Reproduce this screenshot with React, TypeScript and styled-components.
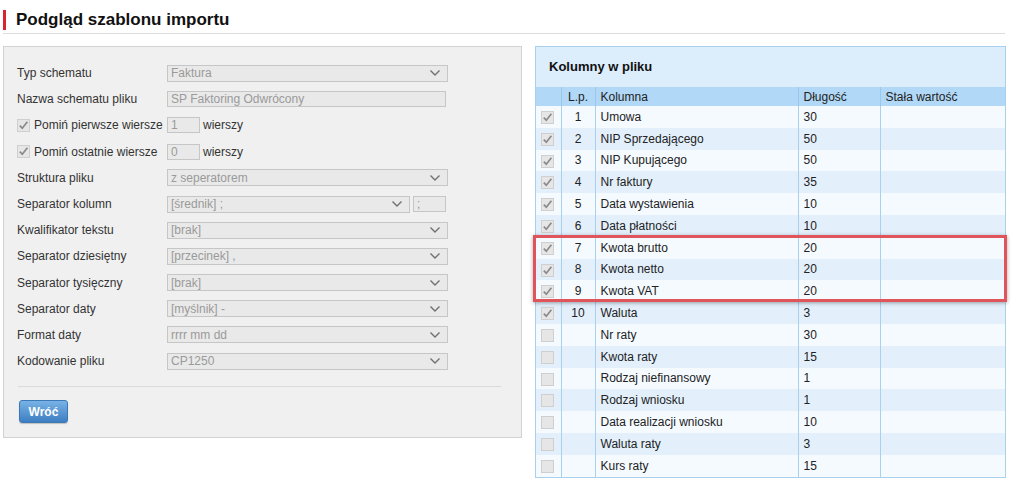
import styled, { createGlobalStyle } from "styled-components";

const GlobalStyle = createGlobalStyle`
    body {
        margin: 0;
        background: #ffffff;
        font-family: "Liberation Sans", Arial, sans-serif;
        font-size: 12px;
        color: #222;
    }
`;

const settings: { label: string; value: string; kind: "select" | "input" }[] = [
    { label: "Typ schematu", value: "Faktura", kind: "select" },
    { label: "Nazwa schematu pliku", value: "SP Faktoring Odwrócony", kind: "input" },
];

const lowerSettings: { label: string; value: string }[] = [
    { label: "Kwalifikator tekstu", value: "[brak]" },
    { label: "Separator dziesiętny", value: "[przecinek] ," },
    { label: "Separator tysięczny", value: "[brak]" },
    { label: "Separator daty", value: "[myślnik] -" },
    { label: "Format daty", value: "rrrr mm dd" },
    { label: "Kodowanie pliku", value: "CP1250" },
];

const columns: { lp?: number; name: string; len: number }[] = [
    { lp: 1, name: "Umowa", len: 30 },
    { lp: 2, name: "NIP Sprzedającego", len: 50 },
    { lp: 3, name: "NIP Kupującego", len: 50 },
    { lp: 4, name: "Nr faktury", len: 35 },
    { lp: 5, name: "Data wystawienia", len: 10 },
    { lp: 6, name: "Data płatności", len: 10 },
    { lp: 7, name: "Kwota brutto", len: 20 },
    { lp: 8, name: "Kwota netto", len: 20 },
    { lp: 9, name: "Kwota VAT", len: 20 },
    { lp: 10, name: "Waluta", len: 3 },
    { name: "Nr raty", len: 30 },
    { name: "Kwota raty", len: 15 },
    { name: "Rodzaj niefinansowy", len: 1 },
    { name: "Rodzaj wniosku", len: 1 },
    { name: "Data realizacji wniosku", len: 10 },
    { name: "Waluta raty", len: 3 },
    { name: "Kurs raty", len: 15 },
];

const Chevron = () => (
    <svg width="12" height="8" viewBox="0 0 12 8">
        <path d="M1.5 1.5 L6 6 L10.5 1.5" fill="none" stroke="#707070" strokeWidth="1.4" />
    </svg>
);

const Tick = ({ on }: { on: boolean }) => (
    <CheckBox>
        {on && (
            <svg width="11" height="11" viewBox="0 0 11 11">
                <path d="M1.8 5.6 L4.3 8.3 L9.4 1.8" fill="none" stroke="#8a8a8a" strokeWidth="1.7" />
            </svg>
        )}
    </CheckBox>
);

export default function App() {
    return (
        <>
            <GlobalStyle />
            <Page>
                <TitleBar>
                    <Title>Podgląd szablonu importu</Title>
                </TitleBar>
                <Content>
                    <FormPanel>
                        {settings.map((s) => (
                            <FormRow key={s.label}>
                                <Label>{s.label}</Label>
                                {s.kind === "select" ? (
                                    <Select width={281}>
                                        <span>{s.value}</span>
                                        <Chevron />
                                    </Select>
                                ) : (
                                    <TextInput width={279}>{s.value}</TextInput>
                                )}
                            </FormRow>
                        ))}
                        <FormRow>
                            <CheckLabel>
                                <Tick on />
                                Pomiń pierwsze wiersze
                            </CheckLabel>
                            <TextInput width={33}>1</TextInput>
                            <Unit>wierszy</Unit>
                        </FormRow>
                        <FormRow>
                            <CheckLabel>
                                <Tick on />
                                Pomiń ostatnie wiersze
                            </CheckLabel>
                            <TextInput width={33}>0</TextInput>
                            <Unit>wierszy</Unit>
                        </FormRow>
                        <FormRow>
                            <Label>Struktura pliku</Label>
                            <Select width={281}>
                                <span>z seperatorem</span>
                                <Chevron />
                            </Select>
                        </FormRow>
                        <FormRow>
                            <Label>Separator kolumn</Label>
                            <Select width={243}>
                                <span>[średnik] ;</span>
                                <Chevron />
                            </Select>
                            <TextInput width={33} style={{ marginLeft: 3 }}>
                                ;
                            </TextInput>
                        </FormRow>
                        {lowerSettings.map((s) => (
                            <FormRow key={s.label}>
                                <Label>{s.label}</Label>
                                <Select width={281}>
                                    <span>{s.value}</span>
                                    <Chevron />
                                </Select>
                            </FormRow>
                        ))}
                        <Divider />
                        <BackButton>Wróć</BackButton>
                    </FormPanel>

                    <ColumnsPanel>
                        <PanelHeader>Kolumny w pliku</PanelHeader>
                        <TableWrap>
                            <Table>
                                <colgroup>
                                    <col style={{ width: 25 }} />
                                    <col style={{ width: 34 }} />
                                    <col style={{ width: 203 }} />
                                    <col style={{ width: 82 }} />
                                    <col />
                                </colgroup>
                                <thead>
                                    <tr>
                                        <Th />
                                        <Th center>L.p.</Th>
                                        <Th>Kolumna</Th>
                                        <Th>Długość</Th>
                                        <Th>Stała wartość</Th>
                                    </tr>
                                </thead>
                                <tbody>
                                    {columns.map((c, i) => (
                                        <Row key={c.name} odd={i % 2 === 1}>
                                            <Td>
                                                <Tick on={c.lp !== undefined} />
                                            </Td>
                                            <Td center>{c.lp ?? ""}</Td>
                                            <Td>{c.name}</Td>
                                            <Td>{c.len}</Td>
                                            <Td />
                                        </Row>
                                    ))}
                                </tbody>
                            </Table>
                            <Highlight />
                        </TableWrap>
                    </ColumnsPanel>
                </Content>
            </Page>
        </>
    );
}

const Page = styled.div`
    width: 1011px;
    padding: 10px 0 0 3px;
    box-sizing: border-box;
`;

const TitleBar = styled.div`
    margin-right: 6px;
    border-bottom: 1px solid #dcdcdc;
    padding-bottom: 3px;
`;

const Title = styled.h1`
    margin: 0;
    border-left: 3px solid #d9232d;
    padding-left: 10px;
    height: 20px;
    line-height: 20px;
    font-size: 17px;
    font-weight: bold;
    color: #111;
`;

const Content = styled.div`
    display: flex;
    align-items: flex-start;
    gap: 13px;
    margin-top: 12px;
`;

const FormPanel = styled.div`
    width: 519px;
    box-sizing: border-box;
    background: #f0f0f0;
    border: 1px solid #d2d2d2;
    padding: 13px 14px 14px 13px;
`;

const FormRow = styled.div`
    display: flex;
    align-items: center;
    height: 26.2px;
`;

const Label = styled.div`
    width: 150px;
    color: #333;
    white-space: nowrap;
`;

const CheckLabel = styled.label`
    width: 150px;
    display: flex;
    align-items: center;
    gap: 4px;
    color: #333;
    white-space: nowrap;
`;

const Select = styled.div<{ width: number }>`
    width: ${(p) => p.width}px;
    height: 17px;
    box-sizing: border-box;
    display: flex;
    align-items: center;
    justify-content: space-between;
    padding: 0 6px 0 3px;
    background: #e9e9e9;
    border: 1px solid #c6c6c6;
    color: #9a9a9a;
`;

const TextInput = styled.div<{ width: number }>`
    width: ${(p) => p.width}px;
    height: 16px;
    box-sizing: border-box;
    display: flex;
    align-items: center;
    padding-left: 3px;
    background: #e9e9e9;
    border: 1px solid #c6c6c6;
    color: #9a9a9a;
`;

const Unit = styled.span`
    margin-left: 3px;
    color: #333;
`;

const Divider = styled.div`
    height: 1px;
    background: #dadada;
    margin: 12px 6px 13px 1px;
`;

const BackButton = styled.button`
    margin-left: 2px;
    width: 49px;
    height: 23px;
    border: 1px solid #3b78b8;
    border-radius: 3px;
    background: linear-gradient(#78b2e6, #3d7fc2);
    color: #fff;
    font-family: "Liberation Sans", Arial, sans-serif;
    font-size: 12px;
    font-weight: bold;
    box-shadow: 0 1px 1px rgba(0, 0, 0, 0.2);
`;

const ColumnsPanel = styled.div`
    width: 471px;
    box-sizing: border-box;
    border: 1px solid #a9d1ee;
`;

const PanelHeader = styled.div`
    height: 40px;
    line-height: 40px;
    padding-left: 13px;
    background: #dcedfb;
    font-size: 13px;
    font-weight: bold;
    color: #111;
`;

const TableWrap = styled.div`
    position: relative;
`;

const Table = styled.table`
    width: 100%;
    border-collapse: collapse;
    table-layout: fixed;
`;

const Th = styled.th<{ center?: boolean }>`
    height: 19px;
    padding: 0 5px;
    background: #b1d8f6;
    font-weight: normal;
    text-align: ${(p) => (p.center ? "center" : "left")};
    color: #222;
    border-left: 1px solid #9ac7ea;
    &:first-child {
        border-left: none;
    }
`;

const Row = styled.tr<{ odd: boolean }>`
    height: 21.8px;
    background: ${(p) => (p.odd ? "#e3f0fc" : "#f5faff")};
`;

const Td = styled.td<{ center?: boolean }>`
    padding: 0 5px;
    text-align: ${(p) => (p.center ? "center" : "left")};
    color: #222;
    white-space: nowrap;
    border-left: 1px solid #a9d1ee;
    &:first-child {
        border-left: none;
        padding: 0 0 0 5px;
    }
`;

const CheckBox = styled.span`
    display: inline-flex;
    align-items: center;
    justify-content: center;
    width: 13px;
    height: 13px;
    box-sizing: border-box;
    border: 1px solid #cfcfcf;
    background: #e6e6e6;
    vertical-align: middle;
`;

const Highlight = styled.div`
    position: absolute;
    left: -3px;
    right: -2px;
    top: 148px;
    height: 67px;
    box-sizing: border-box;
    border: 3px solid #e0545b;
    box-shadow: 0 1px 4px rgba(0, 0, 0, 0.35);
    pointer-events: none;
`;
